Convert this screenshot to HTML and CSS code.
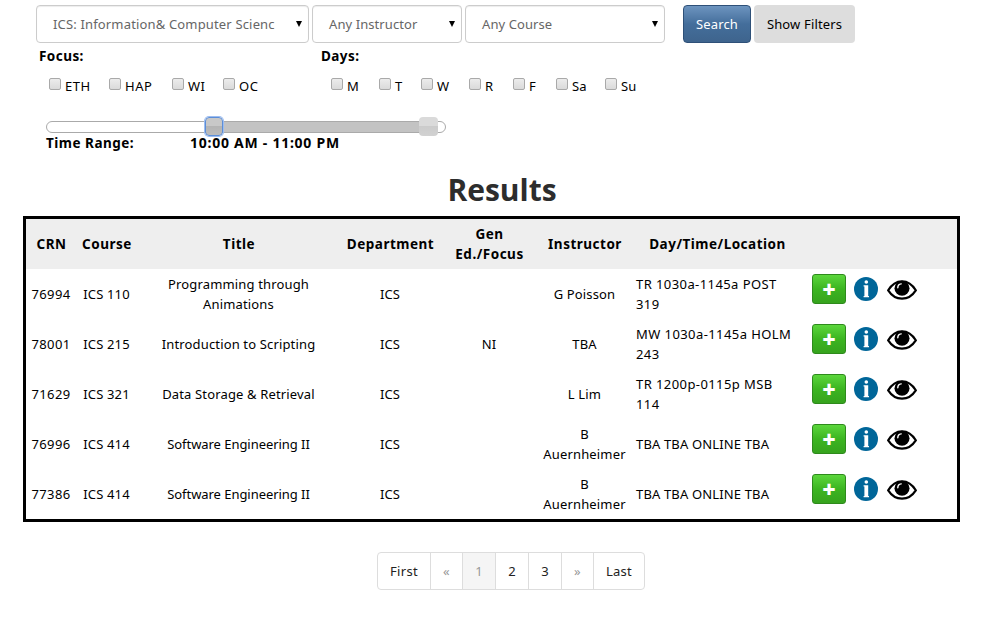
FILE: index.html
```html
<!DOCTYPE html>
<html lang="en">
<head>
<meta charset="utf-8">
<title>Course Search</title>
<link rel="stylesheet" href="styles.css">
</head>
<body>
<svg class="defs" aria-hidden="true">
  <symbol id="info" viewBox="0 0 24 24">
    <circle cx="12" cy="12" r="12" fill="#006699"/>
    <circle cx="12.3" cy="5" r="1.8" fill="#fff"/>
    <path d="M9.600 8.200h4.600v10.800h.8v1.300H9.600V19h.8V9.500h-.8z" fill="#fff"/>
  </symbol>
  <symbol id="eye" viewBox="0 0 30 20">
    <path d="M1.200 10.300C5 4 9.500 1.300 15 1.300S25 4 28.800 10.300C25 16.200 20.500 18.600 15 18.600S5 16.200 1.200 10.300z" fill="#fff" stroke="#000" stroke-width="2.200"/>
    <circle cx="15" cy="8.200" r="7.500" fill="#000"/>
    <path d="M10.800 7.800C10.800 5.500 12.300 4.100 14.200 3.900" fill="none" stroke="#fff" stroke-width="1.400" stroke-linecap="round"/>
  </symbol>
</svg>

<form class="search">
  <div class="select subject"><span>ICS: Information&amp; Computer Scienc</span><i class="arrow"></i></div>
  <div class="select instructor"><span>Any Instructor</span><i class="arrow"></i></div>
  <div class="select course"><span>Any Course</span><i class="arrow"></i></div>
  <button type="button" class="btn primary">Search</button>
  <button type="button" class="btn plain">Show Filters</button>
</form>

<div class="filters">
  <section class="focus">
    <h4>Focus:</h4>
    <div class="checks">
      <label><i class="box"></i>ETH</label><label><i class="box"></i>HAP</label><label><i class="box"></i>WI</label><label><i class="box"></i>OC</label>
    </div>
  </section>
  <section class="days">
    <h4>Days:</h4>
    <div class="checks">
      <label><i class="box"></i>M</label><label><i class="box"></i>T</label><label><i class="box"></i>W</label><label><i class="box"></i>R</label><label><i class="box"></i>F</label><label><i class="box"></i>Sa</label><label><i class="box"></i>Su</label>
    </div>
  </section>
</div>

<div class="time">
  <div class="track"><i class="range"></i><i class="handle start"></i><i class="handle end"></i></div>
  <div class="time-text"><b class="time-label">Time Range:</b><b class="time-value">10:00 AM - 11:00 PM</b></div>
</div>

<h1>Results</h1>

<table class="results">
  <colgroup><col class="c-crn"><col class="c-course"><col class="c-title"><col class="c-dept"><col class="c-gen"><col class="c-inst"><col class="c-day"><col class="c-act"></colgroup>
  <thead>
    <tr><th>CRN</th><th>Course</th><th>Title</th><th>Department</th><th>Gen<br>Ed./Focus</th><th>Instructor</th><th>Day/Time/Location</th><th></th></tr>
  </thead>
  <tbody>
    <tr><td>76994</td><td>ICS 110</td><td>Programming through<br>Animations</td><td>ICS</td><td></td><td>G Poisson</td><td class="when">TR 1030a-1145a POST<br>319</td>
      <td class="act"><div class="actions"><button class="add">+</button><svg class="info"><use href="#info"/></svg><svg class="eye"><use href="#eye"/></svg></div></td></tr>
    <tr><td>78001</td><td>ICS 215</td><td>Introduction to Scripting</td><td>ICS</td><td>NI</td><td>TBA</td><td class="when">MW 1030a-1145a HOLM<br>243</td>
      <td class="act"><div class="actions"><button class="add">+</button><svg class="info"><use href="#info"/></svg><svg class="eye"><use href="#eye"/></svg></div></td></tr>
    <tr><td>71629</td><td>ICS 321</td><td>Data Storage &amp; Retrieval</td><td>ICS</td><td></td><td>L Lim</td><td class="when">TR 1200p-0115p MSB<br>114</td>
      <td class="act"><div class="actions"><button class="add">+</button><svg class="info"><use href="#info"/></svg><svg class="eye"><use href="#eye"/></svg></div></td></tr>
    <tr><td>76996</td><td>ICS 414</td><td class="tight">Software Engineering II</td><td>ICS</td><td></td><td>B<br>Auernheimer</td><td class="when online">TBA TBA ONLINE TBA</td>
      <td class="act"><div class="actions"><button class="add">+</button><svg class="info"><use href="#info"/></svg><svg class="eye"><use href="#eye"/></svg></div></td></tr>
    <tr><td>77386</td><td>ICS 414</td><td class="tight">Software Engineering II</td><td>ICS</td><td></td><td>B<br>Auernheimer</td><td class="when online">TBA TBA ONLINE TBA</td>
      <td class="act"><div class="actions"><button class="add">+</button><svg class="info"><use href="#info"/></svg><svg class="eye"><use href="#eye"/></svg></div></td></tr>
  </tbody>
</table>

<nav class="pages">
  <a class="first">First</a><a class="step">«</a><a class="num current">1</a><a class="num">2</a><a class="num">3</a><a class="step">»</a><a class="last">Last</a>
</nav>
</body>
</html>
```
FILE: styles.css
```css
* { box-sizing: border-box; }
body {
  margin: 0;
  background: #fff;
  color: #000;
  font: 13px/20px "Noto Sans", "Open Sans", sans-serif;
}
.defs { position: absolute; width: 0; height: 0; }
button { font: inherit; letter-spacing: inherit; margin: 0; padding: 0; }

.search { display: flex; padding: 5px 0 0 36px; height: 43px; }
.select {
  display: flex; align-items: center; justify-content: space-between;
  height: 38px; padding: 0 6px 0 16px;
  border: 1px solid #ccc; border-radius: 4px;
  box-shadow: inset 0 1px 1px rgba(0,0,0,.075);
  color: #666; white-space: nowrap; letter-spacing: .08px;
}
.subject { width: 273px; margin-right: 3px; letter-spacing: .16px; }
.instructor { width: 150px; margin-right: 3px; }
.course { width: 200px; margin-right: 18px; }
.arrow {
  border: 3.5px solid transparent; border-top: 6px solid #000; border-bottom: 0;
}
.btn { height: 38px; border-radius: 4px; letter-spacing: .15px; }
.primary {
  width: 68px; margin-right: 3px; color: #fff;
  border: 1px solid #2e5078;
  background: linear-gradient(#6d94bf, #446e9b 50%, #3e648d);
}
.plain { width: 101px; border: 0; background: #ddd; color: #000; }

.filters { display: flex; height: 74px; padding: 3px 0 0 39px; }
.focus { width: 282px; }
h4 { margin: 0; font-size: 13.5px; line-height: 20px; font-weight: 700; letter-spacing: .45px; }
.checks { display: flex; margin: 10px 0 0 10px; }
.checks label { display: flex; }
.box {
  width: 12px; height: 12px; margin: 2px 4px 0 0; flex: none;
  border: 1px solid #a9a9a9; border-radius: 2px;
  background: linear-gradient(#ececec, #dadada);
}
.focus label { letter-spacing: .5px; }
.focus label:nth-child(1) { width: 60px; }
.focus label:nth-child(2) { width: 63px; }
.focus label:nth-child(3) { width: 51px; }
.days label:nth-child(1) { width: 48px; }
.days label:nth-child(2) { width: 42px; }
.days label:nth-child(3) { width: 48px; }
.days label:nth-child(4) { width: 44px; }
.days label:nth-child(5) { width: 43px; }
.days label:nth-child(6) { width: 49px; }

.time { padding: 4px 0 0 46px; }
.track {
  position: relative; width: 400px; height: 12px;
  border: 1px solid #aaa; border-radius: 6px; background: #fff;
}
.range { position: absolute; left: 167px; top: 0; width: 214px; height: 10px; background: #c3c3c3; }
.handle { position: absolute; top: -5px; width: 19px; height: 19px; border-radius: 4px; }
.start {
  left: 158px; width: 18px; border: 1px solid #5c8ed8; box-shadow: 0 0 0 1px #9dbdf0;
  background: linear-gradient(#c8c8c8 50%, #b4b4b4 50%, #bcbcbc);
}
.end { left: 372px; background: linear-gradient(#dadada 50%, #cbcbcb 50%, #d2d2d2); }
.time-text { display: flex; font-size: 13.5px; height: 20px; }
.time-label { width: 144px; letter-spacing: .5px; }
.time-value { font-size: 14px; letter-spacing: .74px; }

h1 {
  margin: 18px 0 7px; padding-left: 6px;
  font: 700 30px/38px "Open Sans", sans-serif;
  color: #2d2d2d; text-align: center;
}

.results {
  table-layout: fixed; width: 937px; height: 306px; margin-left: 23px;
  border: 3px solid #000; border-spacing: 0; letter-spacing: .15px;
}
.c-crn { width: 50px; } .c-course { width: 61px; } .c-title { width: 203px; }
.c-dept { width: 100px; } .c-gen { width: 98px; } .c-inst { width: 93px; }
.c-day { width: 172px; } .c-act { width: 154px; }
th, td { padding: 0; height: 50px; text-align: center; vertical-align: middle; white-space: nowrap; }
th { background: #eee; padding-left: 1px; font-size: 13.5px; font-weight: 700; letter-spacing: .5px; }
td:first-child { letter-spacing: .4px; }
td.tight { letter-spacing: -.05px; }
td.when { text-align: left; padding-left: 5px; letter-spacing: .42px; }
td.online { letter-spacing: .15px; }
td.act { padding-left: 9px; vertical-align: top; }
.actions { display: flex; padding-top: 5px; }
.add {
  width: 34px; height: 30px; border: 1px solid #2e8a1c; border-radius: 3px;
  background: linear-gradient(#5bd63c, #3cb521 50%, #36a31e);
  color: #fff; font: 800 23px/25px "Open Sans", sans-serif;
}
.info { width: 24px; height: 24px; margin: 3px 9px 0 8px; }
.eye { width: 30px; height: 20px; margin-top: 6px; }

.pages {
  display: flex; width: 268px; height: 38px; margin: 30px 0 0 377px;
  border: 1px solid #ddd; border-radius: 4px; overflow: hidden;
}
.pages a { line-height: 36px; text-align: center; color: #222; border-left: 1px solid #ddd; letter-spacing: .3px; }
.pages .first { width: 52px; border-left: 0; }
.pages .step { width: 32px; color: #999; }
.pages .num { width: 33px; }
.pages .last { width: 51px; }
.pages .current { background: #f5f5f5; color: #999; }
```
